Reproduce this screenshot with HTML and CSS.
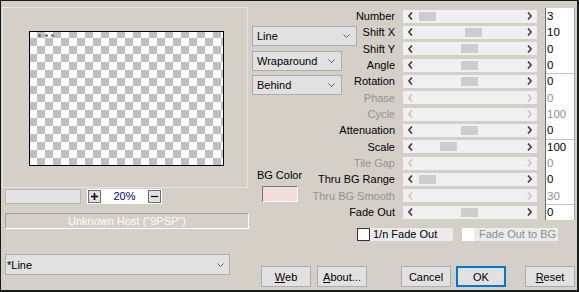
FILE: index.html
```html
<!DOCTYPE html>
<html>
<head>
<meta charset="utf-8">
<link rel="stylesheet" href="styles.css">
</head>
<body>
<div class="win">
  <div class="top">
    <div class="left">
      <div class="group">
        <div class="canvas">
          <span class="dot"></span><span class="dot"></span><span class="dot"></span>
        </div>
      </div>
      <div class="zoomrow">
        <div class="zbox"></div>
        <div class="zctl">
          <span class="zbtn"><svg width="7" height="7" viewBox="0 0 7 7"><path d="M3.5 0V7M0 3.5H7" stroke="#000" stroke-width="1.6"/></svg></span>
          <span class="zval">20%</span>
          <span class="zbtn"><svg width="7" height="7" viewBox="0 0 7 7"><path d="M0 3.5H7" stroke="#000" stroke-width="1.2"/></svg></span>
        </div>
      </div>
      <div class="host">Unknown Host ("9PSP")</div>
    </div>
    <div class="right">
      <div class="stack">
        <div class="params">
          <div class="lbl">Number</div>
          <div class="sl"><svg class="ar" viewBox="0 0 5 8"><polyline points="4,0.5 1,4 4,7.5"/></svg><div class="trk"><div class="th" style="margin-left:6px"></div></div><svg class="ar" viewBox="0 0 5 8"><polyline points="1,0.5 4,4 1,7.5"/></svg></div>
          <div class="ed">3</div>

          <div class="lbl">Shift X</div>
          <div class="sl"><svg class="ar" viewBox="0 0 5 8"><polyline points="4,0.5 1,4 4,7.5"/></svg><div class="trk"><div class="th" style="margin-left:52px"></div></div><svg class="ar" viewBox="0 0 5 8"><polyline points="1,0.5 4,4 1,7.5"/></svg></div>
          <div class="ed">10</div>

          <div class="lbl">Shift Y</div>
          <div class="sl"><svg class="ar" viewBox="0 0 5 8"><polyline points="4,0.5 1,4 4,7.5"/></svg><div class="trk"><div class="th" style="margin-left:48px"></div></div><svg class="ar" viewBox="0 0 5 8"><polyline points="1,0.5 4,4 1,7.5"/></svg></div>
          <div class="ed">0</div>

          <div class="lbl">Angle</div>
          <div class="sl"><svg class="ar" viewBox="0 0 5 8"><polyline points="4,0.5 1,4 4,7.5"/></svg><div class="trk"><div class="th" style="margin-left:48px"></div></div><svg class="ar" viewBox="0 0 5 8"><polyline points="1,0.5 4,4 1,7.5"/></svg></div>
          <div class="ed">0</div>

          <div class="lbl">Rotation</div>
          <div class="sl"><svg class="ar" viewBox="0 0 5 8"><polyline points="4,0.5 1,4 4,7.5"/></svg><div class="trk"><div class="th" style="margin-left:48px"></div></div><svg class="ar" viewBox="0 0 5 8"><polyline points="1,0.5 4,4 1,7.5"/></svg></div>
          <div class="ed sep">0</div>

          <div class="lbl dis">Phase</div>
          <div class="sl dis"><svg class="ar" viewBox="0 0 5 8"><polyline points="4,0.5 1,4 4,7.5"/></svg><div class="trk"></div><svg class="ar" viewBox="0 0 5 8"><polyline points="1,0.5 4,4 1,7.5"/></svg></div>
          <div class="ed dis">0</div>

          <div class="lbl dis">Cycle</div>
          <div class="sl dis"><svg class="ar" viewBox="0 0 5 8"><polyline points="4,0.5 1,4 4,7.5"/></svg><div class="trk"></div><svg class="ar" viewBox="0 0 5 8"><polyline points="1,0.5 4,4 1,7.5"/></svg></div>
          <div class="ed dis">100</div>

          <div class="lbl">Attenuation</div>
          <div class="sl"><svg class="ar" viewBox="0 0 5 8"><polyline points="4,0.5 1,4 4,7.5"/></svg><div class="trk"><div class="th" style="margin-left:48px"></div></div><svg class="ar" viewBox="0 0 5 8"><polyline points="1,0.5 4,4 1,7.5"/></svg></div>
          <div class="ed">0</div>

          <div class="lbl">Scale</div>
          <div class="sl"><svg class="ar" viewBox="0 0 5 8"><polyline points="4,0.5 1,4 4,7.5"/></svg><div class="trk"><div class="th" style="margin-left:27px"></div></div><svg class="ar" viewBox="0 0 5 8"><polyline points="1,0.5 4,4 1,7.5"/></svg></div>
          <div class="ed sep">100</div>

          <div class="lbl dis">Tile Gap</div>
          <div class="sl dis"><svg class="ar" viewBox="0 0 5 8"><polyline points="4,0.5 1,4 4,7.5"/></svg><div class="trk"></div><svg class="ar" viewBox="0 0 5 8"><polyline points="1,0.5 4,4 1,7.5"/></svg></div>
          <div class="ed dis">0</div>

          <div class="lbl">Thru BG Range</div>
          <div class="sl"><svg class="ar" viewBox="0 0 5 8"><polyline points="4,0.5 1,4 4,7.5"/></svg><div class="trk"><div class="th" style="margin-left:6px"></div></div><svg class="ar" viewBox="0 0 5 8"><polyline points="1,0.5 4,4 1,7.5"/></svg></div>
          <div class="ed">0</div>

          <div class="lbl dis">Thru BG Smooth</div>
          <div class="sl dis"><svg class="ar" viewBox="0 0 5 8"><polyline points="4,0.5 1,4 4,7.5"/></svg><div class="trk"></div><svg class="ar" viewBox="0 0 5 8"><polyline points="1,0.5 4,4 1,7.5"/></svg></div>
          <div class="ed dis">30</div>

          <div class="lbl">Fade Out</div>
          <div class="sl"><svg class="ar" viewBox="0 0 5 8"><polyline points="4,0.5 1,4 4,7.5"/></svg><div class="trk"><div class="th" style="margin-left:48px"></div></div><svg class="ar" viewBox="0 0 5 8"><polyline points="1,0.5 4,4 1,7.5"/></svg></div>
          <div class="ed sep">0</div>
        </div>
        <div class="side">
          <div class="dd dd1"><span>Line</span><svg class="chev" viewBox="0 0 7 4"><polyline points="0.5,0.5 3.5,3.5 6.5,0.5"/></svg></div>
          <div class="dd dd2"><span>Wraparound</span><svg class="chev" viewBox="0 0 7 4"><polyline points="0.5,0.5 3.5,3.5 6.5,0.5"/></svg></div>
          <div class="dd dd3"><span>Behind</span><svg class="chev" viewBox="0 0 7 4"><polyline points="0.5,0.5 3.5,3.5 6.5,0.5"/></svg></div>
          <div class="bgc">
            <div class="bgl">BG Color</div>
            <div class="sw"></div>
          </div>
        </div>
      </div>
      <div class="checks">
        <div class="cb"></div><div class="cl">1/n Fade Out</div>
        <div class="cb cb2"></div><div class="cl cl2">Fade Out to BG</div>
      </div>
    </div>
  </div>
  <div class="bottom">
    <div class="sel"><span>*Line</span><svg class="chev" viewBox="0 0 7 4"><polyline points="0.5,0.5 3.5,3.5 6.5,0.5"/></svg></div>
    <div class="btns">
      <div class="btn"><u>W</u>eb</div>
      <div class="btn b-about"><u>A</u>bout...</div>
      <div class="btn b-cancel">Cancel</div>
      <div class="btn b-ok">OK</div>
      <div class="btn b-reset"><u>R</u>eset</div>
    </div>
  </div>
</div>
</body>
</html>
```
FILE: styles.css
```css
* { box-sizing: border-box; }
body {
  margin: 0;
  font-family: "Liberation Sans", Arial, sans-serif;
  font-size: 11px;
  color: #000;
}
.win {
  width: 579px;
  height: 292px;
  background: #d4d0c8;
  border: 1px solid #1a1a1a;
  border-right-width: 2px;
  border-bottom-width: 2px;
  display: flex;
  flex-direction: column;
}
.top { display: flex; height: 240px; }
.left {
  width: 247px;
  flex: none;
  padding-left: 1px;
  padding-top: 6px;
  display: flex;
  flex-direction: column;
}
.group {
  width: 246px;
  height: 181px;
  border: 1px solid #e6e4df;
  padding: 23px 0 0 26px;
}
.canvas {
  width: 195px;
  height: 135px;
  border: 1px solid #000;
  background-color: #fff;
  background-image: conic-gradient(#c0c0c0 25%, #fff 0 50%, #c0c0c0 0 75%, #fff 0);
  background-size: 16px 16px;
  background-position: -1px -2px;
  display: flex;
  align-items: flex-start;
  gap: 3.5px;
  padding: 2px 0 0 8px;
}
.dot {
  width: 3px;
  height: 3px;
  border-radius: 50%;
  background: #7f6f78;
}
.zoomrow { display: flex; margin-top: 1px; margin-left: 3px; height: 15px; }
.zbox { width: 76px; height: 15px; background: #e4e4e4; border: 1px solid #b8b8b8; }
.zctl {
  margin-left: 6px;
  width: 75px;
  height: 15px;
  background: #fff;
  display: flex;
  align-items: center;
  padding: 1px;
}
.zbtn {
  width: 13px;
  height: 13px;
  border: 1px solid #6e6e6e;
  background: #e1e1e1;
  display: flex;
  align-items: center;
  justify-content: center;
}
.zval { flex: 1; text-align: center; color: #000080; line-height: 13px; }
.host {
  margin-top: 9px;
  margin-left: 3px;
  width: 244px;
  height: 16px;
  border-top: 1px solid #a0a0a0;
  border-left: 1px solid #a0a0a0;
  border-bottom: 1px solid #fff;
  border-right: 1px solid #fff;
  color: #fcfcfc;
  text-align: center;
  line-height: 14px;
}
.right { flex: 1; padding-top: 7px; display: flex; flex-direction: column; }
.stack { display: grid; }
.params, .side { grid-area: 1 / 1; }
.params {
  display: grid;
  grid-template-columns: 149px 140px 38px;
  grid-template-rows: repeat(13, 16.33px);
  align-items: center;
}
.lbl { text-align: right; padding-right: 2px; white-space: nowrap; }
.lbl.dis { color: #939393; }
.sl {
  margin-left: 6px;
  height: 13px;
  background: #f0f0f0;
  display: flex;
  align-items: center;
  padding: 0 5px;
}
.ar { width: 5px; height: 8px; fill: none; stroke: #444; stroke-width: 1.7; }
.sl.dis .ar { stroke: #c8c8c8; }
.trk { flex: 1; display: flex; align-items: center; height: 100%; }
.th { width: 17px; height: 9px; background: #cdcdcd; }
.ed {
  align-self: stretch;
  margin-left: 8px;
  width: 30px;
  background: #fff;
  border-left: 1px solid #6b6b6b;
  border-right: 1px solid #a0a0a0;
  padding-left: 1px;
  line-height: 16px;
  font-size: 11.5px;
}
.ed.sep { box-shadow: inset 0 1px #c4c4c4; }
.ed.dis { color: #8d8d8d; }
.side {
  justify-self: start;
  align-self: start;
  display: flex;
  flex-direction: column;
  align-items: flex-start;
  padding-left: 4px;
  padding-top: 18px;
}
.dd {
  height: 20px;
  background: #e1e1e1;
  border: 1px solid #adadad;
  display: flex;
  align-items: center;
  justify-content: space-between;
  padding: 0 6px 0 4px;
}
.dd1 { width: 105px; }
.dd2 { width: 90px; margin-top: 5px; }
.dd3 { width: 90px; margin-top: 4px; }
.chev { width: 7px; height: 4px; fill: none; stroke: #606060; stroke-width: 1; }
.bgc {
  margin-top: 74px;
  width: 55px;
  display: flex;
  flex-direction: column;
  align-items: center;
}
.bgl { line-height: 13px; }
.sw {
  margin-top: 4px;
  width: 36px;
  height: 16px;
  background: #f1ddd9;
  border-top: 1px solid #777;
  border-left: 1px solid #777;
  border-bottom: 1px solid #fff;
  border-right: 1px solid #fff;
}
.checks { display: flex; margin-top: 8px; padding-left: 109px; height: 13px; }
.cb { width: 13px; height: 13px; background: #fff; border: 1px solid #333; }
.cl { width: 83px; background: #ebebeb; padding-left: 3px; line-height: 13px; white-space: nowrap; }
.cb2 { margin-left: 9px; width: 12px; border: none; }
.cl2 { width: 84px; color: #8d8d8d; padding-left: 5px; }
.bottom { display: flex; align-items: flex-start; margin-top: 13px; }
.sel {
  margin-left: 4px;
  width: 225px;
  height: 21px;
  background: #e1e1e1;
  border: 1px solid #adadad;
  display: flex;
  align-items: center;
  justify-content: space-between;
  padding: 0 5px 0 1px;
}
.btns { display: flex; margin-top: 12px; margin-left: 31px; }
.btn {
  width: 50px;
  height: 21px;
  background: #e1e1e1;
  border: 1px solid #adadad;
  display: flex;
  align-items: center;
  justify-content: center;
}
.b-about { margin-left: 6px; }
.b-cancel { margin-left: 34px; }
.b-ok { margin-left: 5px; border: 2px solid #0078d7; }
.b-reset { margin-left: 19px; }
```
